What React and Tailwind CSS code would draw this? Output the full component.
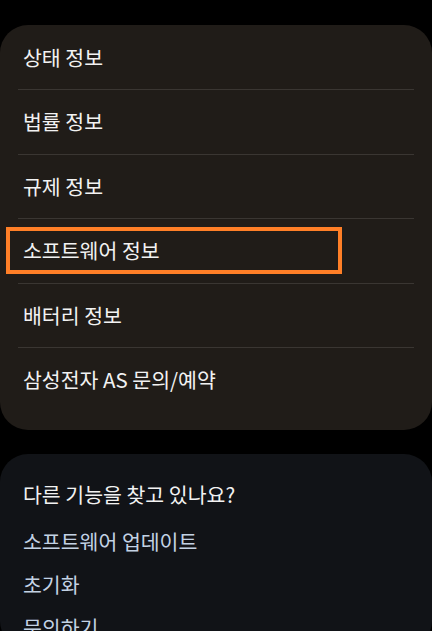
import React from "react";

const items = ["상태 정보", "법률 정보", "규제 정보", "소프트웨어 정보", "배터리 정보", "삼성전자 AS 문의/예약"];
const links = ["소프트웨어 업데이트", "초기화", "문의하기"];

const App = () => {
    return (
        <div
            className="w-[432px] h-[631px] overflow-hidden bg-black pt-[25px]"
            style={{ fontFamily: '"Noto Sans CJK KR", "Noto Sans", sans-serif' }}
        >
            {/* settings list */}
            <div className="rounded-[28px] bg-[#201c18] pb-[18px]">
                {items.map((label, i) => (
                    <div key={label}>
                        {i > 0 && <div className="mx-[18px] h-px bg-[#3a3632]" />}
                        {label === "소프트웨어 정보" ? (
                            <div className="flex h-[63.5px] items-center">
                                <div className="ml-[6px] flex h-[47px] w-[336px] items-center border-4 border-[#ff7f27] pl-[13px] text-[20.5px] text-[#f2f2f2]">
                                    {label}
                                </div>
                            </div>
                        ) : (
                            <div className={`flex items-center pl-[23px] text-[20.5px] text-[#f2f2f2] ${i === 0 ? "h-[64px]" : "h-[63.5px]"}`}>
                                {label}
                            </div>
                        )}
                    </div>
                ))}
            </div>

            {/* related */}
            <div className="mt-[24px] rounded-[28px] bg-[#111317] px-[23px] pt-[22px]">
                <div className="text-[20.5px] leading-[36px] text-[#f2f2f2]">다른 기능을 찾고 있나요?</div>
                <div className="mt-[8px] flex flex-col">
                    {links.map((l) => (
                        <div key={l} className="h-[43px] text-[20.5px] leading-[43px] text-[#c3d2e4]">
                            {l}
                        </div>
                    ))}
                </div>
            </div>
        </div>
    );
};

export default App;
